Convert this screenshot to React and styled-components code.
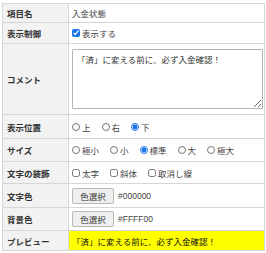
import React from 'react'
import styled, { createGlobalStyle } from 'styled-components'

const GlobalStyle = createGlobalStyle`
  html, body {
    margin: 0;
    padding: 0;
    background: #fff;
  }
  body {
    font-family: "Noto Sans CJK JP", "Noto Sans", sans-serif;
    font-size: 8.5px;
    color: #333;
  }
`

const Wrapper = styled.div`
  padding: 3px 1px 0 2px;
`

const Table = styled.table`
  width: 263px;
  border-collapse: collapse;
  table-layout: fixed;
  border: 1px solid #cfcfcf;
`

const Row = styled.tr`
  height: ${({ $h }) => $h}px;
`

const Label = styled.th`
  width: 57px;
  padding: 0 4px;
  background-color: #f2f2f2;
  border: 1px solid #d6d6d6;
  text-align: left;
  font-weight: 700;
  color: #333;
  white-space: nowrap;
  vertical-align: middle;
`

const Value = styled.td`
  padding: 0 3px;
  border: 1px solid #d6d6d6;
  vertical-align: middle;
  color: #444;
  white-space: nowrap;
  background-color: ${({ $bg }) => $bg || '#fff'};
`

const Options = styled.div`
  display: flex;
  align-items: center;
  gap: 11px;
`

const Option = styled.label`
  display: inline-flex;
  align-items: center;
`

const Radio = styled.input.attrs({ type: 'radio' })`
  width: 8px;
  height: 8px;
  margin: 0 2px 0 0;
  accent-color: #1a73e8;
`

const Check = styled.input.attrs({ type: 'checkbox' })`
  width: 8px;
  height: 8px;
  margin: 0 2px 0 0;
  accent-color: #1a73e8;
`

const Comment = styled.textarea`
  display: block;
  box-sizing: border-box;
  width: 191px;
  height: 60px;
  margin: 0;
  padding: 3px 4px;
  border: 1px solid #b5b5b5;
  border-radius: 1px;
  font-family: inherit;
  font-size: 8.5px;
  color: #333;
  line-height: 12px;
`

const ColorRow = styled.div`
  display: flex;
  align-items: center;
  gap: 4px;
`

const ColorButton = styled.button`
  width: 42px;
  height: 16px;
  padding: 0;
  background-color: #efefef;
  border: 1px solid #b9b9b9;
  border-radius: 2px;
  font-family: inherit;
  font-size: 8.5px;
  color: #333;
`

const Code = styled.span`
  font-family: "Liberation Sans", Arial, sans-serif;
  font-size: 8.5px;
  color: #444;
`

const PreviewText = styled.span`
  color: #111;
`

const message = '「済」に変える前に、必ず入金確認！'

export default function App() {
  return (
    <>
      <GlobalStyle />
      <Wrapper>
        <Table>
          <tbody>
            <Row $h={19}>
              <Label>項目名</Label>
              <Value>入金状態</Value>
            </Row>
            <Row $h={21}>
              <Label>表示制御</Label>
              <Value>
                <Option>
                  <Check defaultChecked />
                  表示する
                </Option>
              </Value>
            </Row>
            <Row $h={71}>
              <Label>コメント</Label>
              <Value>
                <Comment defaultValue={message} />
              </Value>
            </Row>
            <Row $h={24}>
              <Label>表示位置</Label>
              <Value>
                <Options>
                  <Option><Radio name="pos" />上</Option>
                  <Option><Radio name="pos" />右</Option>
                  <Option><Radio name="pos" defaultChecked />下</Option>
                </Options>
              </Value>
            </Row>
            <Row $h={23}>
              <Label>サイズ</Label>
              <Value>
                <Options>
                  <Option><Radio name="size" />極小</Option>
                  <Option><Radio name="size" />小</Option>
                  <Option><Radio name="size" defaultChecked />標準</Option>
                  <Option><Radio name="size" />大</Option>
                  <Option><Radio name="size" />極大</Option>
                </Options>
              </Value>
            </Row>
            <Row $h={22}>
              <Label>文字の装飾</Label>
              <Value>
                <Options>
                  <Option><Check />太字</Option>
                  <Option><Check />斜体</Option>
                  <Option><Check />取消し線</Option>
                </Options>
              </Value>
            </Row>
            <Row $h={24}>
              <Label>文字色</Label>
              <Value>
                <ColorRow>
                  <ColorButton>色選択</ColorButton>
                  <Code>#000000</Code>
                </ColorRow>
              </Value>
            </Row>
            <Row $h={23}>
              <Label>背景色</Label>
              <Value>
                <ColorRow>
                  <ColorButton>色選択</ColorButton>
                  <Code>#FFFF00</Code>
                </ColorRow>
              </Value>
            </Row>
            <Row $h={20}>
              <Label>プレビュー</Label>
              <Value $bg="#ffff00">
                <PreviewText>{message}</PreviewText>
              </Value>
            </Row>
          </tbody>
        </Table>
      </Wrapper>
    </>
  )
}
